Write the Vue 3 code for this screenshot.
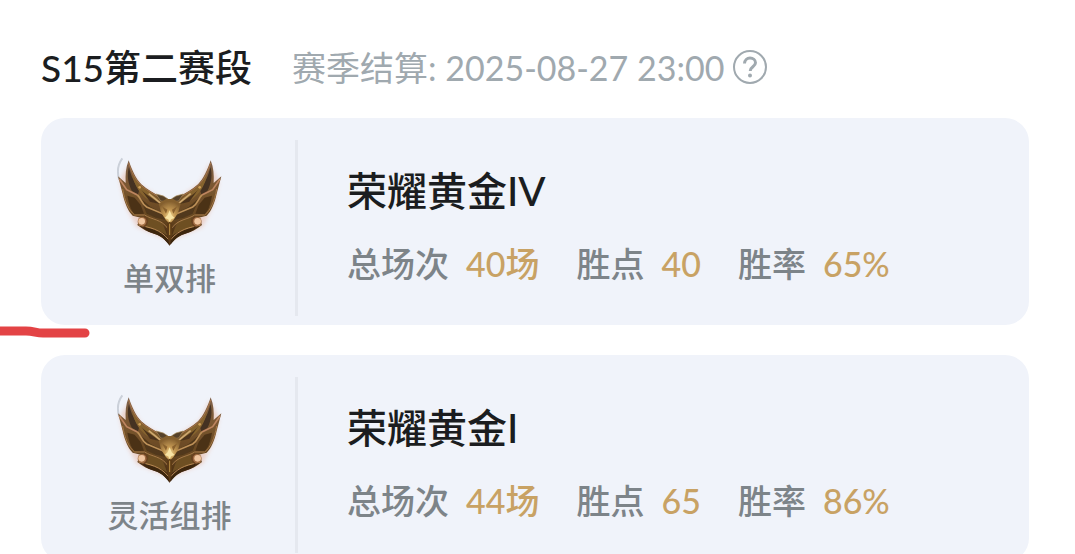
<template>
  <main class="season">
    <header class="season-head">
      <h1 class="season-title">S15第二赛段</h1>
      <p class="season-end">赛季结算: 2025-08-27 23:00</p>
      <button class="help" type="button" aria-label="赛季说明">
        <svg viewBox="0 0 36 36" aria-hidden="true">
          <circle cx="18" cy="17" r="16" />
          <path d="M12.500 13.500c.2-3.400 2.500-5.500 5.500-5.500s5.500 2 5.500 4.800c0 4-5.300 4-5.300 8.200" />
          <circle class="dot" cx="18" cy="25.500" r="2" />
        </svg>
      </button>
    </header>

    <section v-for="rank in ranks" :key="rank.queue" class="card">
      <div class="queue">
        <svg class="emblem" viewBox="30 15 360 300" aria-hidden="true">
          <defs>
            <linearGradient id="wing" x1="0" y1="0" x2="0" y2="1">
              <stop offset="0" stop-color="#80624c" />
              <stop offset="0.3" stop-color="#7a5730" />
              <stop offset="0.7" stop-color="#654520" />
              <stop offset="1" stop-color="#38200f" />
            </linearGradient>
            <radialGradient id="core" cx="0.5" cy="0.7" r="0.6">
              <stop offset="0" stop-color="#f3dc98" />
              <stop offset="0.4" stop-color="#c79b55" />
              <stop offset="1" stop-color="#85602f" />
            </radialGradient>
            <filter id="glow" x="-20%" y="-20%" width="140%" height="140%">
              <feGaussianBlur stdDeviation="6" />
            </filter>
            <filter id="soft" x="-5%" y="-5%" width="110%" height="110%">
              <feGaussianBlur stdDeviation="1.800" />
            </filter>
            <g id="half">
              <path fill="url(#wing)" d="M86 46C96 76 108 102 124 118 142 134 162 144 184 158L210 168V302C198 288 186 273 166 268 146 262 126 252 112 240L122 218 98 212C84 198 74 174 68 146L54 94 77 114C76 90 77 68 86 46Z" />
              <!-- ala exterior -->
              <path fill="#453022" d="M87 66C92 92 104 116 118 134L114 148 96 138C84 116 80 90 87 66Z" />
              <path fill="#86642f" d="M96 84C106 108 122 126 150 142L172 160 184 180 150 168C120 150 102 122 96 84Z" />
              <path fill="#4b331b" d="M124 134C138 150 160 160 180 178L150 170Z" />
              <path fill="#4c3217" d="M82 152L104 158 122 180 132 206 104 208C92 196 86 174 82 152Z" />
              <path fill="#51381a" d="M120 158L152 186 192 206 200 226 168 218 140 206Z" />
              <path fill="#6e4f24" d="M146 216L186 230 202 272C180 256 156 250 136 246L144 232Z" />
              <path fill="#3d2611" d="M116 240C144 252 178 250 207 282V300C190 274 170 268 146 260Z" />
              <!-- nervios brillantes -->
              <path fill="none" stroke="#be8560" stroke-width="5" d="M58 102L80 134 112 150" />
              <path fill="none" stroke="#bd9058" stroke-width="5" d="M112 150C124 160 122 174 140 186L192 208 204 224" />
              <path fill="none" stroke="#cfa972" stroke-width="5" d="M146 146L186 178" />
              <path fill="none" stroke="#a67a48" stroke-width="3" d="M68 132C74 168 86 196 104 210L134 210C154 224 184 222 203 250" />
              <path fill="none" stroke="#a8754a" stroke-width="3" d="M86 54C98 92 112 116 140 134L176 156" />
              <path fill="none" stroke="#b98a54" stroke-width="3" d="M116 240C150 248 180 252 206 284" />
              <path fill="#57422a" stroke="#a58a58" stroke-width="2" d="M168 147L190 153 204 162 200 170 182 168Z" />
              <circle cx="127" cy="230" r="14" fill="#a06c42" />
              <circle cx="125" cy="229" r="10" fill="#f0c6a0" />
              <path fill="none" stroke="#6b4220" stroke-width="4" d="M132 214C146 222 144 240 130 246" />
              <circle cx="119" cy="127" r="4" fill="#d0a058" />
            </g>
          </defs>
          <path class="halo" filter="url(#glow)" d="M84 62L59 105 76 181 110 245 210 288 308 245 344 172 357 108 329 55 300 115 210 177 123 122Z" />
          <path class="wisp" filter="url(#soft)" d="M67 40C52 60 51 83 58 105" />
          <g filter="url(#soft)">
            <use href="#half" />
            <use href="#half" transform="translate(418 0) scale(-1 1)" />
            <path fill="url(#core)" d="M176 176L198 162H220L242 176 234 204 221 224 209 236 197 224 184 204Z" />
            <path fill="#8a622f" d="M186 184L202 194 198 206ZM232 184L216 194 220 206Z" />
            <path fill="#f8e4a4" d="M209 196L215 211 224 219 213 223 209 233 205 223 194 219 203 211Z" />
            <path fill="#5c3a17" d="M201 236L209 230 217 236 216 272 209 302 202 272Z" />
            <path fill="none" stroke="#bd9147" stroke-width="3" d="M209 236V270" />
          </g>
        </svg>
        <span class="queue-name">{{ rank.queue }}</span>
      </div>

      <div class="detail">
        <h2 class="tier">{{ rank.tier }}</h2>
        <dl class="stats">
          <div v-for="stat in rank.stats" :key="stat.label" class="stat">
            <dt>{{ stat.label }}</dt>
            <dd>{{ stat.value }}</dd>
          </div>
        </dl>
      </div>
    </section>

    <svg class="marker" viewBox="0 0 90 14" aria-hidden="true">
      <path d="M-6 5H26C34 5 36 7 43 7H85" />
    </svg>
  </main>
</template>

<script setup>
const ranks = [
  {
    queue: '单双排',
    tier: '荣耀黄金IV',
    stats: [
      { label: '总场次', value: '40场' },
      { label: '胜点', value: '40' },
      { label: '胜率', value: '65%' },
    ],
  },
  {
    queue: '灵活组排',
    tier: '荣耀黄金I',
    stats: [
      { label: '总场次', value: '44场' },
      { label: '胜点', value: '65' },
      { label: '胜率', value: '86%' },
    ],
  },
]
</script>

<style>
body {
  margin: 0;
  background: #fff;
  overflow: hidden;
}
</style>

<style scoped>
.season {
  position: relative;
  display: flex;
  flex-direction: column;
  gap: 30px;
  padding: 48px 46px 0 41px;
  font-family: Lato, "Noto Sans CJK SC", sans-serif;
  color: #1b1d20;
}

.season-head {
  display: flex;
  align-items: center;
  height: 40px;
}

.season-title {
  margin: 0 40px 0 0;
  font-size: 37px;
  font-weight: 500;
  line-height: 40px;
}

.season-end {
  margin: 0 8px 0 0;
  font-size: 34px;
  line-height: 40px;
  color: #a0a9af;
}

.help {
  width: 36px;
  height: 36px;
  padding: 0;
  border: 0;
  background: none;
}
.help svg {
  display: block;
  fill: none;
  stroke: #a0a9af;
  stroke-width: 2;
}
.help path { stroke-width: 3; }
.help .dot { fill: #a0a9af; stroke: none; }

.card {
  display: flex;
  box-sizing: border-box;
  min-height: 207px;
  padding: 22px 24px 9px 0;
  border-radius: 24px;
  background: #f0f3fa;
}

.queue {
  display: flex;
  flex-direction: column;
  align-items: center;
  box-sizing: border-box;
  flex: 0 0 257px;
  padding: 10px 0 0 3px;
  border-right: 3px solid #e5e8ef;
}

.emblem {
  width: 120px;
  height: 100px;
}
.halo { fill: #e5a184; opacity: 0.4; }
.wisp {
  fill: none;
  stroke: #bcc2cc;
  stroke-width: 6;
  opacity: 0.7;
}

.queue-name {
  margin-top: 8px;
  font-size: 31px;
  font-weight: 500;
  line-height: 40px;
  color: #7d8489;
}

.detail { padding: 26px 0 0 49px; }

.tier {
  margin: 0;
  font-size: 40px;
  font-weight: 500;
  line-height: 50px;
}

.stats {
  display: flex;
  gap: 37px;
  margin: 28px 0 0;
  font-size: 34px;
  font-weight: 500;
  line-height: 40px;
}
.stat { display: flex; gap: 17px; }
.stat dt { color: #7d8489; }
.stat dd { margin: 0; color: #c8a264; }

/* trazo rojo que entra por el borde izquierdo */
.marker {
  position: absolute;
  top: 326px;
  left: 0;
  width: 90px;
  height: 14px;
}
.marker path {
  fill: none;
  stroke: #e34345;
  stroke-width: 9;
  stroke-linecap: round;
}
</style>
